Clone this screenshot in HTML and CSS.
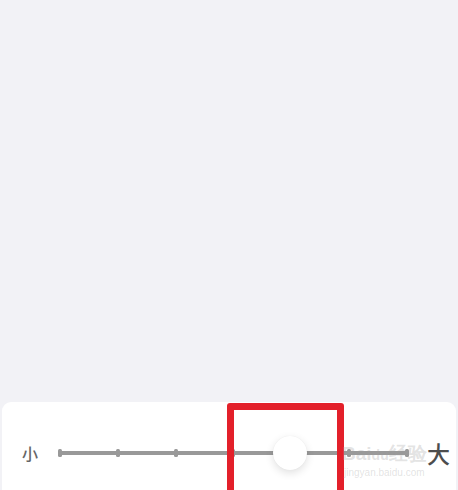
FILE: index.html
```html
<!DOCTYPE html>
<html lang="zh">
<head>
<meta charset="utf-8">
<title>字体大小</title>
<link rel="stylesheet" href="styles.css">
</head>
<body>
<div class="screen">
  <div class="preview"></div>
  <div class="panel">
    <div class="size-row">
      <span class="label small">小</span>
      <div class="track">
        <span class="tick"></span>
        <span class="tick"></span>
        <span class="tick"></span>
        <span class="tick"></span>
        <span class="tick"></span>
        <span class="tick"></span>
        <span class="tick"></span>
        <span class="thumb"></span>
      </div>
      <span class="label large">大</span>
    </div>
  </div>
  <div class="highlight"></div>
  <div class="watermark">
    <span class="wm-brand">Bai<span class="wm-paw">du</span>经验</span>
    <span class="wm-url">jingyan.baidu.com</span>
  </div>
</div>
</body>
</html>
```
FILE: styles.css
```css
* { box-sizing: border-box; }

html, body {
  margin: 0;
  padding: 0;
}

body {
  background: #f2f2f6;
  font-family: "Noto Sans CJK SC", "Noto Sans", sans-serif;
}

.screen {
  position: relative;
  width: 458px;
  height: 490px;
  display: flex;
  flex-direction: column;
  overflow: hidden;
}

.preview {
  height: 402px;
  flex: none;
}

.panel {
  flex: 1;
  margin: 0 2px;
  background: #ffffff;
  border-radius: 9px 9px 0 0;
  padding: 34px 6px 0 20px;
}

.size-row {
  display: flex;
  align-items: center;
  height: 34px;
}

.label {
  color: #666666;
  line-height: 1;
  font-weight: 500;
}

.label.small {
  font-size: 16px;
  width: 16px;
  margin-right: 20px;
}

.label.large {
  font-size: 23px;
  color: #4d4d4d;
  margin-left: 18px;
}

/* slider rail with evenly spaced stops */
.track {
  position: relative;
  width: 352px;
  height: 8px;
  display: flex;
  justify-content: space-between;
  align-items: center;
  background: linear-gradient(#999999, #999999) center / 100% 4px no-repeat;
}

.tick {
  width: 4px;
  height: 8px;
  border-radius: 1.5px;
  background: #999999;
}

.thumb {
  position: absolute;
  left: 215px;
  top: 50%;
  width: 34px;
  height: 34px;
  margin-top: -17px;
  border-radius: 50%;
  background: #ffffff;
  box-shadow: 0 3px 8px rgba(0, 0, 0, 0.12), 0 0 1px rgba(0, 0, 0, 0.08);
}

.highlight {
  position: absolute;
  left: 227px;
  top: 403px;
  width: 117px;
  height: 110px;
  border: 7px solid #e3202a;
  border-radius: 3px;
}

.watermark {
  position: absolute;
  left: 342px;
  top: 443px;
  display: flex;
  flex-direction: column;
  color: rgba(160, 160, 160, 0.3);
  pointer-events: none;
}

.wm-brand {
  font-family: "Liberation Sans", Arial, sans-serif;
  font-size: 19px;
  font-weight: bold;
  line-height: 22px;
}

.wm-paw {
  font-size: 14px;
}

.wm-url {
  font-family: "Liberation Sans", Arial, sans-serif;
  font-size: 10px;
  line-height: 13px;
  margin-left: 2px;
}
```
